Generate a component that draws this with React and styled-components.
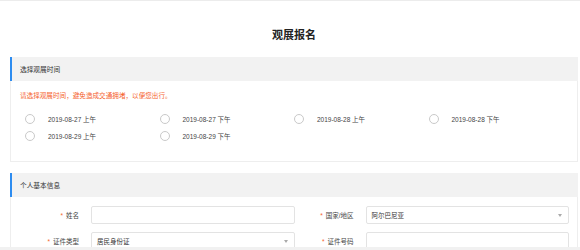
import React from "react";
import styled, { createGlobalStyle } from "styled-components";

const GlobalStyle = createGlobalStyle`
  html, body { margin: 0; padding: 0; background: #fff; }
  body {
    font-family: "Liberation Sans", Arial, "Noto Sans CJK SC", sans-serif;
    color: #333;
    overflow: hidden;
  }
  * { box-sizing: border-box; }
`;

const Page = styled.div`
  border-top: 1px solid #ececec;
  padding: 0 2px 0 10px;
  height: 250px;
  overflow: hidden;
`;

const Title = styled.h1`
  margin: 0 0 14px;
  padding-top: 26px;
  font-size: 11px;
  line-height: 16px;
  font-weight: bold;
  text-align: center;
  color: #222;
`;

const Section = styled.section`
  margin-bottom: ${(p) => p.$gap || 0}px;
`;

const SectionHeader = styled.div`
  height: 24px;
  display: flex;
  align-items: center;
  padding-left: 8px;
  background: #f2f2f2;
  border-left: 2px solid #2d8cf0;
  font-size: 6.7px;
  color: #333;
`;

const SectionBody = styled.div`
  border: 1px solid #eeeeee;
  border-top: none;
  padding: ${(p) => p.$pad};
`;

const Hint = styled.div`
  font-size: 6.6px;
  line-height: 9px;
  color: #f5622d;
  margin-bottom: 10px;
`;

const RadioGrid = styled.div`
  display: grid;
  grid-template-columns: repeat(4, 134.5px);
  padding-left: 5px;
`;

const RadioItem = styled.label`
  display: flex;
  align-items: center;
  height: 17px;
  font-size: 6.5px;
  color: #444;
`;

const Circle = styled.span`
  width: 10px;
  height: 10px;
  border: 1px solid #c9c9c9;
  border-radius: 50%;
  background: #fff;
  margin-right: 13px;
  flex: none;
`;

const FormGrid = styled.div`
  display: grid;
  grid-template-columns: 1fr 1fr;
  row-gap: 8px;
`;

const Field = styled.div`
  display: flex;
  align-items: center;
  gap: 12px;
`;

const Label = styled.div`
  width: 59px;
  flex: none;
  text-align: right;
  font-size: 6.5px;
  color: #444;
`;

const Star = styled.span`
  color: #f5622d;
  margin-right: 3px;
`;

const InputBox = styled.div`
  flex: 1;
  height: 18px;
  border: 1px solid #e3e3e3;
  border-radius: 2px;
  display: flex;
  align-items: center;
  justify-content: space-between;
  padding: 0 6px 0 5px;
  font-size: 6.5px;
  color: #333;
  background: #fff;
`;

const Caret = styled.span`
  width: 0;
  height: 0;
  border-left: 2.5px solid transparent;
  border-right: 2.5px solid transparent;
  border-top: 3px solid #aaa;
`;

const BottomStrip = styled.div`
  position: fixed;
  left: 0;
  right: 0;
  bottom: 0;
  height: 3px;
  background: #f1f1f1;
`;

const dates = [
  "2019-08-27 上午",
  "2019-08-27 下午",
  "2019-08-28 上午",
  "2019-08-28 下午",
  "2019-08-29 上午",
  "2019-08-29 下午",
];

const fields = [
  { label: "姓名", value: "", select: false },
  { label: "国家/地区", value: "阿尔巴尼亚", select: true },
  { label: "证件类型", value: "居民身份证", select: true },
  { label: "证件号码", value: "", select: false },
];

export default function App() {
  return (
    <>
      <GlobalStyle />
      <Page>
        <Title>观展报名</Title>
        <Section $gap={11}>
          <SectionHeader>选择观展时间</SectionHeader>
          <SectionBody $pad="10px 9px 17px 9px">
            <Hint>请选择观展时间，避免造成交通拥堵，以便您出行。</Hint>
            <RadioGrid>
              {dates.map((d) => (
                <RadioItem key={d}>
                  <Circle />
                  {d}
                </RadioItem>
              ))}
            </RadioGrid>
          </SectionBody>
        </Section>
        <Section>
          <SectionHeader>个人基本信息</SectionHeader>
          <SectionBody $pad="9px 8px 20px 9px">
            <FormGrid>
              {fields.map((f) => (
                <Field key={f.label}>
                  <Label>
                    <Star>*</Star>
                    {f.label}
                  </Label>
                  <InputBox>
                    <span>{f.value}</span>
                    {f.select && <Caret />}
                  </InputBox>
                </Field>
              ))}
            </FormGrid>
          </SectionBody>
        </Section>
      </Page>
      <BottomStrip />
    </>
  );
}
